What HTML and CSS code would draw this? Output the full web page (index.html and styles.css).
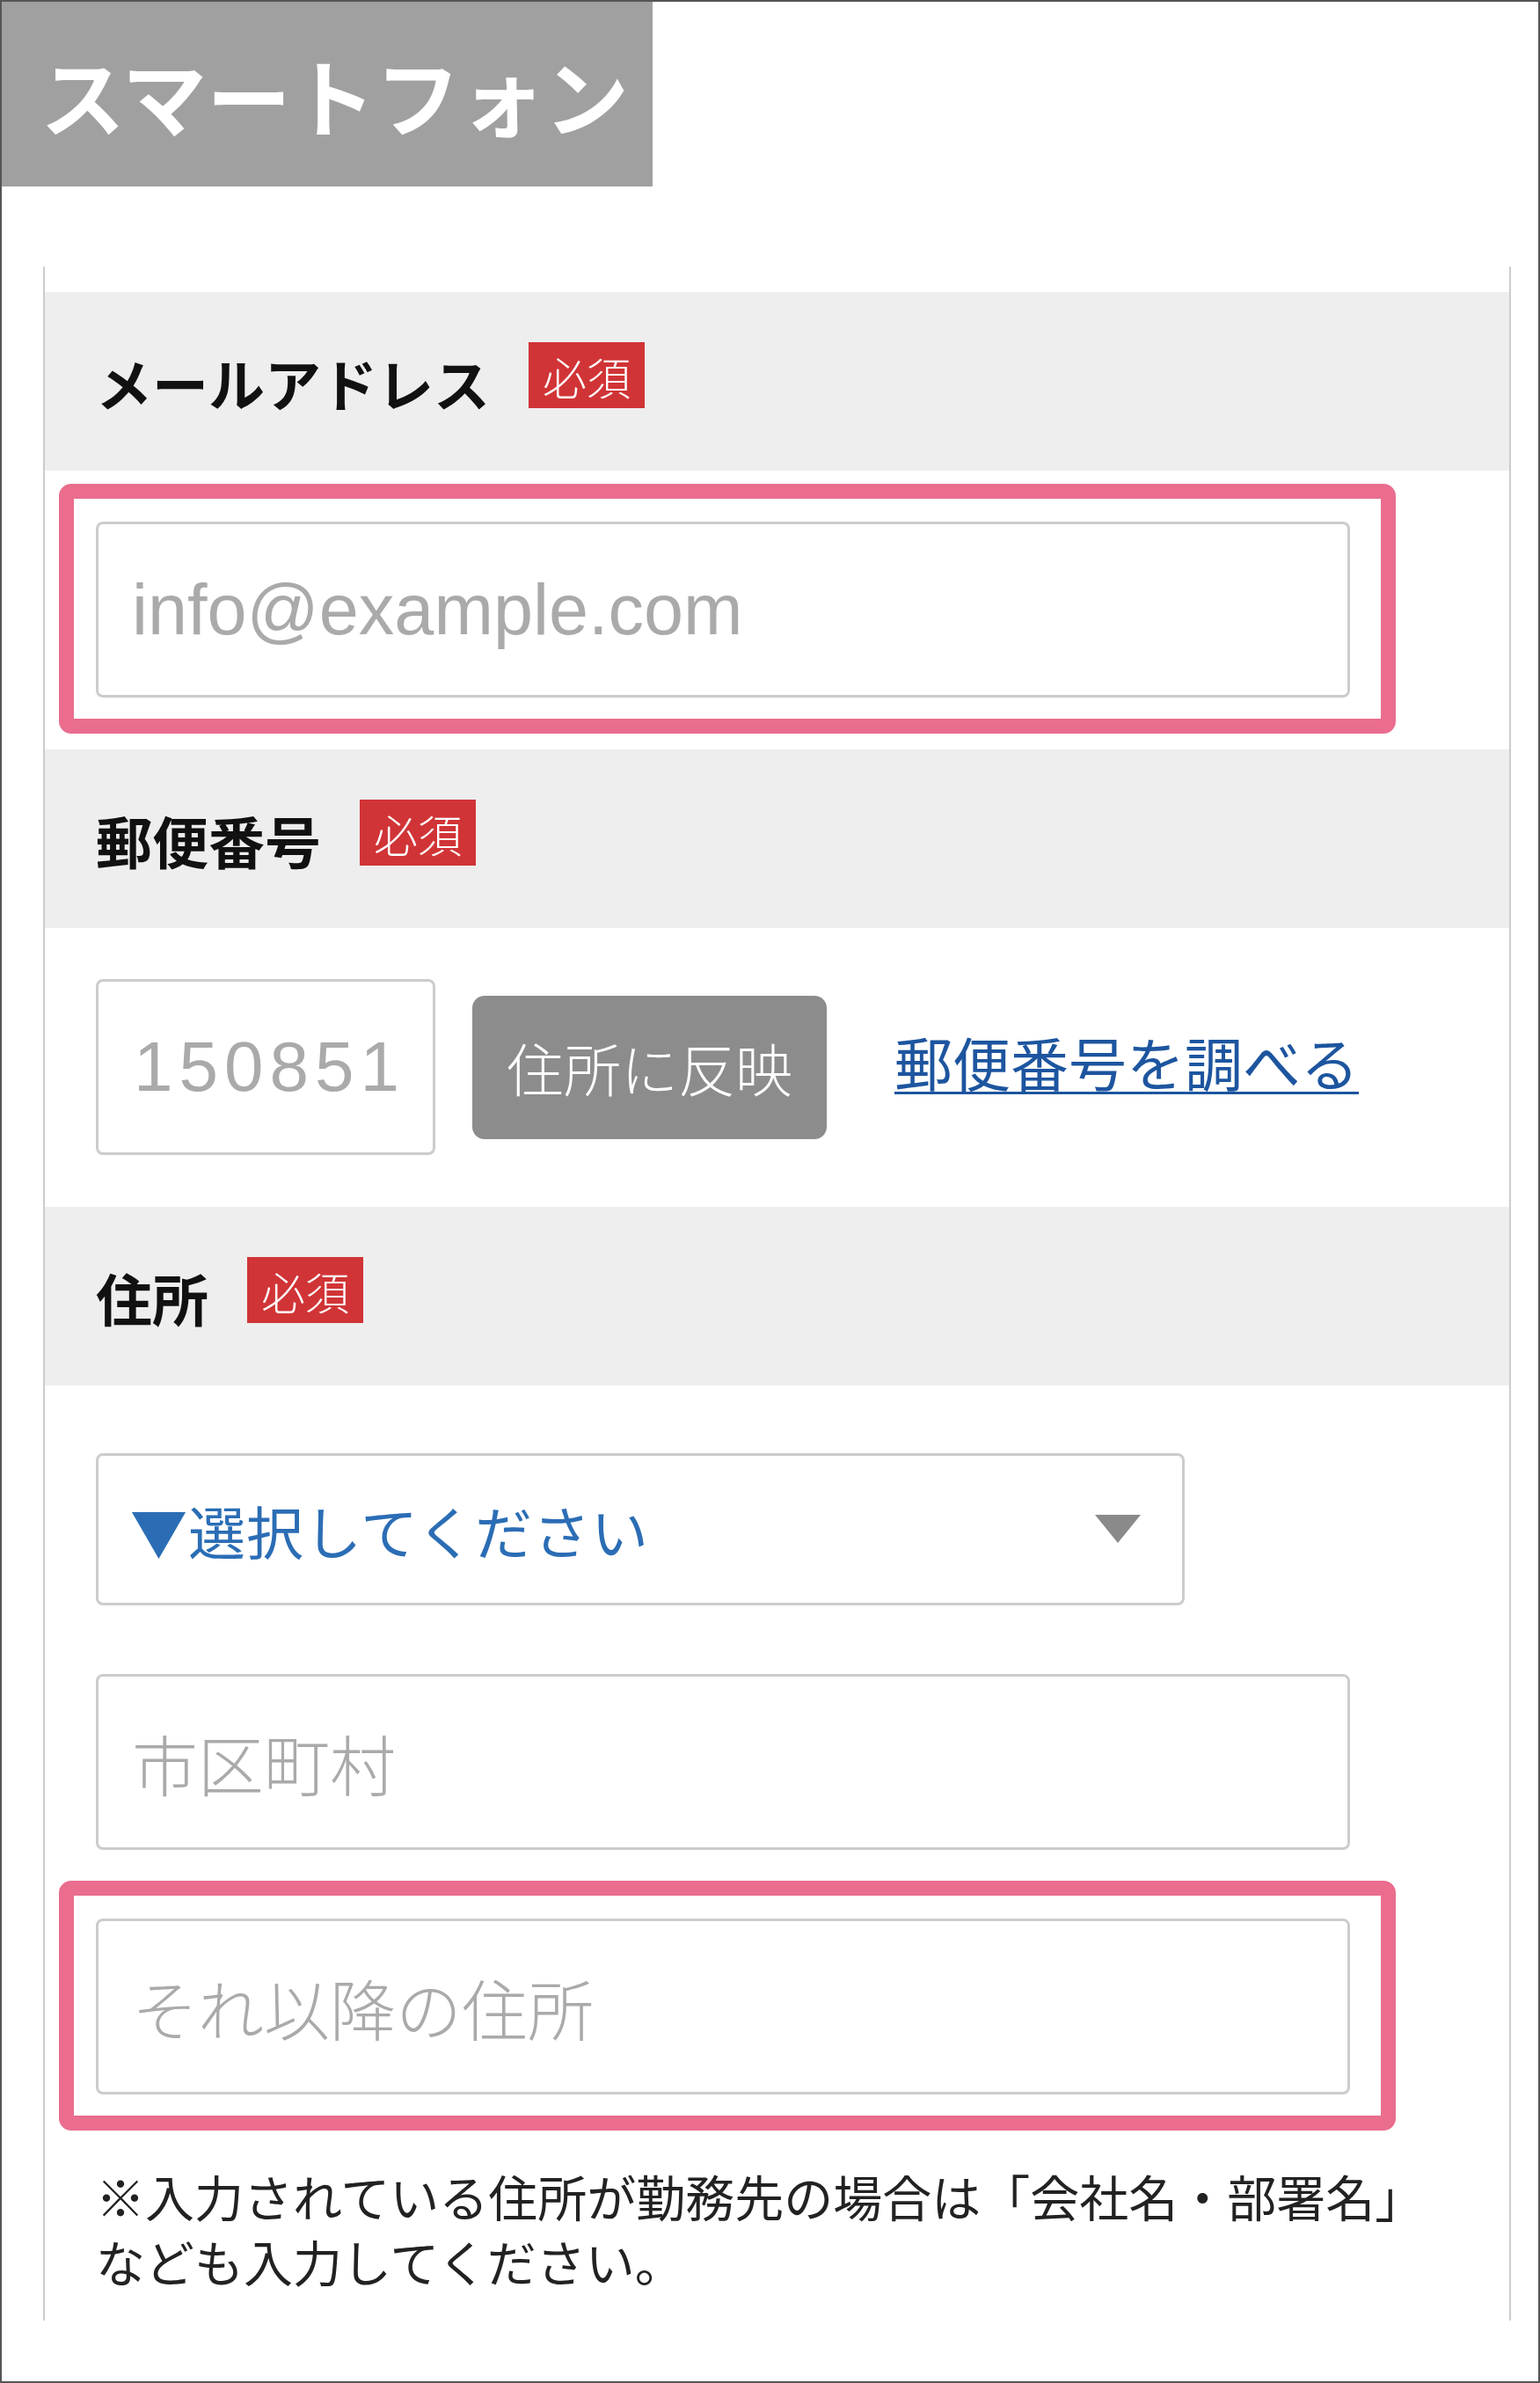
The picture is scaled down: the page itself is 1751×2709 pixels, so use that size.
FILE: index.html
```html
<!DOCTYPE html>
<html lang="ja">
<head>
    <meta charset="UTF-8">
    <meta name="viewport" content="width=device-width, initial-scale=1.0">
    <title>スマートフォン 入力フォーム</title>
    <link rel="stylesheet" href="styles.css">
</head>
<body>
    <div class="frame">
        <div class="device-label">スマートフォン</div>

        <div class="form-panel">
            <!-- メールアドレス -->
            <div class="form-head">
                <span class="form-label">メールアドレス</span>
                <span class="required">必須</span>
            </div>
            <div class="form-body">
                <div class="highlight">
                    <input type="email" class="text-input" placeholder="info@example.com">
                </div>
            </div>

            <!-- 郵便番号 -->
            <div class="form-head">
                <span class="form-label">郵便番号</span>
                <span class="required">必須</span>
            </div>
            <div class="form-body zip-row">
                <input type="text" class="text-input zip-input" placeholder="1508512">
                <button class="zip-button">住所に反映</button>
                <a href="#" class="zip-link">郵便番号を調べる</a>
            </div>

            <!-- 住所 -->
            <div class="form-head">
                <span class="form-label">住所</span>
                <span class="required">必須</span>
            </div>
            <div class="form-body address-body">
                <div class="select-wrap">
                    <select class="pref-select">
                        <option>▼選択してください</option>
                    </select>
                    <span class="select-arrow"></span>
                </div>
                <input type="text" class="text-input jp" placeholder="市区町村">
                <div class="highlight">
                    <input type="text" class="text-input jp" placeholder="それ以降の住所">
                </div>
                <p class="address-note">※入力されている住所が勤務先の場合は「会社名・部署名」なども入力してください。</p>
            </div>
        </div>
    </div>
</body>
</html>
```

FILE: styles.css
```css
body {
    margin: 0;
    background-color: #fff;
    font-family: "Noto Sans CJK JP", "Noto Sans", sans-serif;
    color: #222;
}
.frame {
    width: 1751px;
    height: 2709px;
    box-sizing: border-box;
    border: 2px solid #555;
    background-color: #fff;
}
.device-label {
    width: 740px;
    height: 210px;
    box-sizing: border-box;
    padding-left: 44px;
    display: flex;
    align-items: center;
    background-color: #a0a0a0;
    color: #fff;
    font-size: 96px;
    font-weight: 700;
    line-height: 1;
}
.form-panel {
    margin: 91px 31px 0 47px;
    padding-top: 29px;
    border-left: 2px solid #ccc;
    border-right: 2px solid #ccc;
}
.form-head {
    height: 203px;
    box-sizing: border-box;
    padding-left: 58px;
    display: flex;
    align-items: center;
    gap: 44px;
    background-color: #eee;
}
.form-label {
    font-size: 64px;
    font-weight: 700;
    color: #111;
    line-height: 1;
}
.required {
    width: 132px;
    height: 75px;
    margin-bottom: 14px;
    display: flex;
    align-items: center;
    justify-content: center;
    background-color: #d13436;
    color: #fff;
    font-size: 50px;
    font-weight: 300;
    line-height: 1;
}
.form-body {
    padding: 58px 58px 59px;
}
.text-input {
    display: block;
    width: 1426px;
    height: 200px;
    box-sizing: border-box;
    margin: 0;
    padding: 0 36px 0 38px;
    border: 3px solid #ccc;
    border-radius: 8px;
    background-color: #fff;
    font-family: "Liberation Sans", "Noto Sans CJK JP", sans-serif;
    font-size: 81px;
    color: #333;
    outline: none;
}
.text-input::placeholder {
    color: #aaa;
    opacity: 1;
}
.text-input.jp {
    font-family: "Noto Sans CJK JP", sans-serif;
    font-size: 75px;
    font-weight: 300;
}
.highlight {
    position: relative;
    width: fit-content;
}
.highlight::after {
    content: "";
    position: absolute;
    top: -43px;
    bottom: -41px;
    left: -42px;
    right: -52px;
    border: 17px solid #ea6d8e;
    border-radius: 14px;
    pointer-events: none;
}
.zip-row {
    display: flex;
    align-items: center;
}
.zip-input {
    width: 386px;
    padding-left: 40px;
    font-size: 80px;
    letter-spacing: 7px;
}
.zip-button {
    width: 403px;
    height: 163px;
    margin-left: 42px;
    padding: 0;
    border: none;
    border-radius: 14px;
    background-color: #8c8c8c;
    color: #fff;
    font-family: "Noto Sans CJK JP", sans-serif;
    font-size: 65px;
    font-weight: 300;
    cursor: pointer;
}
.zip-link {
    margin-left: 77px;
    margin-bottom: 14px;
    color: #1d559f;
    font-size: 66px;
    text-decoration: underline;
    text-decoration-thickness: 3px;
    text-underline-offset: 6px;
}
.address-body {
    padding: 77px 58px 31px;
    display: flex;
    flex-direction: column;
    align-items: flex-start;
    gap: 78px;
}
.select-wrap {
    position: relative;
}
.pref-select {
    display: block;
    width: 1238px;
    height: 173px;
    margin: 0;
    padding: 0 0 0 36px;
    border: 3px solid #ccc;
    border-radius: 8px;
    background-color: #fff;
    appearance: none;
    -webkit-appearance: none;
    font-family: "Noto Sans CJK JP", sans-serif;
    font-size: 65px;
    letter-spacing: 1px;
    color: #2b6db5;
    outline: none;
}
.select-arrow {
    position: absolute;
    top: 70px;
    right: 50px;
    width: 0;
    height: 0;
    border-left: 26px solid transparent;
    border-right: 26px solid transparent;
    border-top: 32px solid #8a8a8a;
    pointer-events: none;
}
.address-note {
    margin: 0;
    max-width: 1540px;
    font-size: 56px;
    line-height: 74px;
    color: #222;
}
```
